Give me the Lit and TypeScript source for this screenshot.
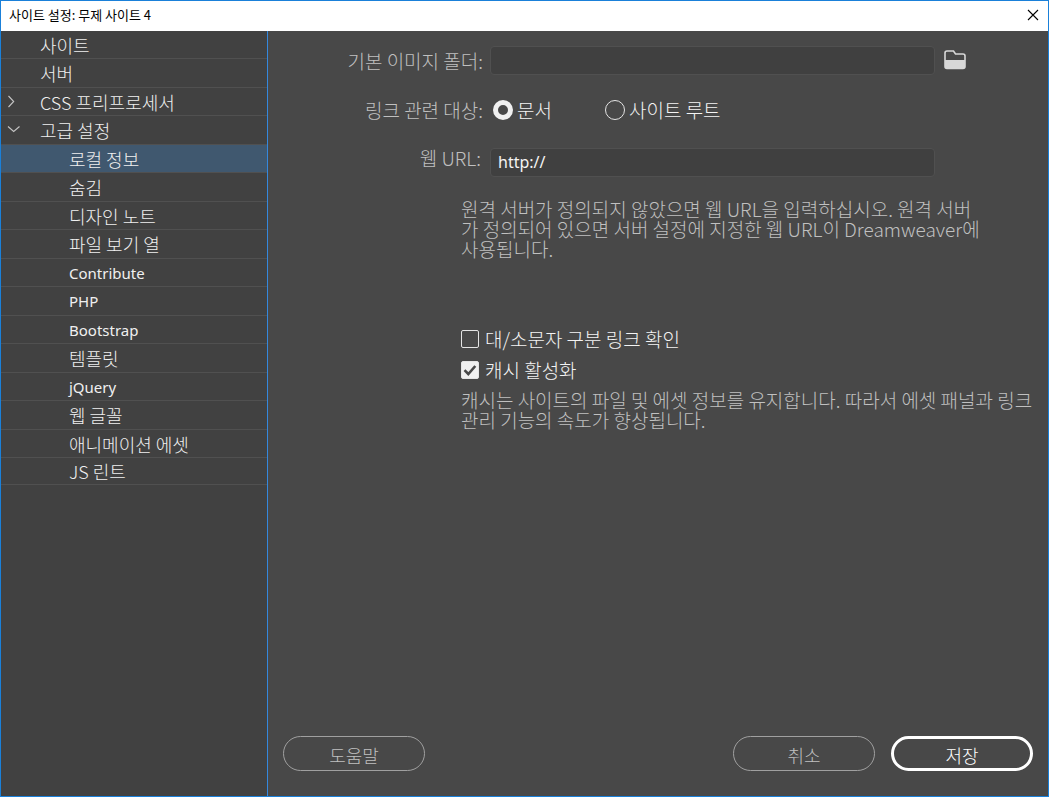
import { LitElement, html, css, nothing } from "lit";
import { customElement, state } from "lit/decorators.js";
import { classMap } from "lit/directives/class-map.js";

interface Category {
  label: string;
  child?: boolean;
  latin?: boolean;
  fold?: "open" | "closed";
}

const CATEGORIES: Category[] = [
  { label: "사이트" },
  { label: "서버" },
  { label: "CSS 프리프로세서", fold: "closed" },
  { label: "고급 설정", fold: "open" },
  { label: "로컬 정보", child: true },
  { label: "숨김", child: true },
  { label: "디자인 노트", child: true },
  { label: "파일 보기 열", child: true },
  { label: "Contribute", child: true, latin: true },
  { label: "PHP", child: true, latin: true },
  { label: "Bootstrap", child: true, latin: true },
  { label: "템플릿", child: true },
  { label: "jQuery", child: true, latin: true },
  { label: "웹 글꼴", child: true },
  { label: "애니메이션 에셋", child: true },
  { label: "JS 린트", child: true },
];

@customElement("category-list")
export class CategoryList extends LitElement {
  @state() private selected = 4;

  static styles = css`
    :host {
      display: block;
      box-sizing: border-box;
      background: #414141;
    }
    nav {
      height: 100%;
      box-sizing: border-box;
      border-right: 1px solid #3488de;
    }
    ul {
      list-style: none;
      margin: 0;
      padding: 0;
    }
    li {
      height: 28px;
      box-sizing: border-box;
      border-bottom: 1px solid #505050;
    }
    li:nth-child(even) {
      height: 29px;
    }
    li:last-child {
      height: 27px;
    }
    .row {
      display: flex;
      align-items: center;
      width: 100%;
      height: 100%;
      margin: 0;
      padding: 0 0 0 5px;
      border: 0;
      background: none;
      color: #f0f0f0;
      font: inherit;
      text-align: left;
    }
    .row.selected {
      background: #40586f;
    }
    .row.latin {
      font-family: "Noto Sans", sans-serif;
      font-size: 15px;
      font-weight: 400;
    }
    .fold {
      width: 34px;
      height: 14px;
      flex: none;
    }
    .child .fold {
      width: 63px;
    }
    svg {
      display: block;
      fill: none;
      stroke: #c4c4c4;
      stroke-width: 1.1;
    }
  `;

  private arrow(fold?: "open" | "closed") {
    if (!fold) return nothing;
    return html`<svg width="14" height="14" viewBox="0 0 14 14" aria-hidden="true">
      <path d=${fold === "open" ? "M2 3.5 L7.7 8.5 L13.5 3.5" : "M2.5 1 L7.7 6.5 L2.5 12"}></path>
    </svg>`;
  }

  render() {
    return html`<nav aria-label="설정 범주">
      <ul>
        ${CATEGORIES.map(
          (c, i) => html`<li>
            <button
              class=${classMap({ row: true, child: !!c.child, latin: !!c.latin, selected: i === this.selected })}
              @click=${() => (this.selected = i)}
            >
              <span class="fold">${this.arrow(c.fold)}</span>
              <span>${c.label}</span>
            </button>
          </li>`
        )}
      </ul>
    </nav>`;
  }
}

@customElement("app-root")
export class AppRoot extends LitElement {
  static styles = css`
    :host {
      display: flex;
      flex-direction: column;
      box-sizing: border-box;
      min-height: 100vh;
      border: 1px solid #1a80d9;
      background: #484848;
      color: #f4f4f4;
      font-family: "Noto Sans CJK KR", sans-serif;
      font-size: 18px;
      font-weight: 300;
      line-height: 20px;
    }
    .titlebar {
      display: flex;
      align-items: center;
      justify-content: space-between;
      height: 30px;
      padding: 0 9px 0 8px;
      background: #fff;
      color: #000;
    }
    h1 {
      margin: 0;
      padding-bottom: 2px;
      font-size: 13px;
      font-weight: 400;
      line-height: 16px;
    }
    button {
      font: inherit;
      color: inherit;
    }
    .icon-button {
      display: flex;
      padding: 0 0 2px;
      border: 0;
      background: none;
    }
    .body {
      flex: 1;
      display: grid;
      grid-template-columns: 267px minmax(0, 1fr);
    }
    main {
      display: flex;
      flex-direction: column;
      padding: 15px 15px 25px;
    }
    form {
      flex: 1;
      display: flex;
      flex-direction: column;
      font-size: 19px;
    }
    .fields {
      display: grid;
      grid-template-columns: 200px minmax(0, 1fr) 91px;
      column-gap: 7px;
      row-gap: 17px;
      align-items: center;
    }
    .label {
      text-align: right;
      color: #c0c0c0;
    }
    .relative-label {
      padding-bottom: 4px;
    }
    .url-label {
      align-self: start;
      padding-right: 2px;
    }
    .text {
      width: 100%;
      height: 29px;
      box-sizing: border-box;
      padding: 0 7px 2px;
      border: 1px solid #505050;
      border-radius: 4px;
      background: #404040;
      color: #f4f4f4;
      font-family: "Noto Sans", sans-serif;
      font-size: 16px;
    }
    .browse {
      padding-left: 2px;
    }
    .radios {
      display: flex;
      height: 39px;
      padding-bottom: 4px;
      box-sizing: border-box;
      align-items: center;
      grid-column: 2 / 4;
    }
    .option {
      display: flex;
      align-items: center;
      gap: 6px;
    }
    .radios .option {
      gap: 4px;
      min-width: 112px;
      padding-left: 3px;
      box-sizing: border-box;
    }
    input[type="radio"],
    input[type="checkbox"] {
      appearance: none;
      flex: none;
      margin: 0;
      box-sizing: border-box;
    }
    input[type="radio"] {
      width: 20px;
      height: 20px;
      border: 1px solid #e4e4e4;
      border-radius: 50%;
    }
    input[type="radio"]:checked {
      border: 5px solid #f0f0f0;
    }
    .check {
      position: relative;
      display: flex;
    }
    input[type="checkbox"] {
      width: 18px;
      height: 18px;
      border: 1px solid #e4e4e4;
      border-radius: 2px;
    }
    input[type="checkbox"]:checked {
      background: #f0f0f0;
    }
    .check svg {
      position: absolute;
      inset: 0;
      pointer-events: none;
      fill: none;
      stroke: #484848;
      stroke-width: 2.6;
    }
    .notes {
      padding-left: 178px;
    }
    p {
      margin: 0;
      color: #c0c0c0;
    }
    .url-note {
      max-width: 522px;
      padding-top: 22px;
      min-height: 120px;
    }
    .checks {
      display: grid;
      gap: 11px;
      padding: 10px 0;
    }
    footer {
      display: flex;
      gap: 16px;
    }
    .action {
      width: 142px;
      height: 35px;
      padding: 2px 0 0;
      border: 1px solid #a0a0a0;
      border-radius: 18px;
      background: none;
      color: #c0c0c0;
    }
    .help {
      margin-right: auto;
    }
    .primary {
      border: 3px solid #fff;
      color: #fff;
    }
  `;

  render() {
    return html`
      <header class="titlebar">
        <h1>사이트 설정: 무제 사이트 4</h1>
        <button class="icon-button" aria-label="닫기">
          <svg width="12" height="12" viewBox="0 0 12 12" fill="none" stroke="#000" stroke-width="1.1">
            <path d="M1 1 L11 11 M11 1 L1 11"></path>
          </svg>
        </button>
      </header>
      <div class="body">
        <category-list></category-list>
        <main>
          <form @submit=${(e: Event) => e.preventDefault()}>
            <div class="fields">
              <label class="label" for="folder">기본 이미지 폴더:</label>
              <input class="text" id="folder" type="text" />
              <button class="icon-button browse" type="button" aria-label="폴더 찾아보기">
                <svg width="22" height="20" viewBox="0 0 22 20">
                  <path
                    d="M1 3 Q1 1 3 1 H9.5 L11.5 4 H19 Q21 4 21 6 V16.5 Q21 18.5 19 18.5 H3 Q1 18.5 1 16.5 Z"
                    fill="none"
                    stroke="#d8d8d8"
                    stroke-width="1.6"
                  ></path>
                  <path d="M1 10 H21 V16.5 Q21 18.5 19 18.5 H3 Q1 18.5 1 16.5 Z" fill="#d8d8d8"></path>
                </svg>
              </button>

              <span class="label relative-label" id="relative">링크 관련 대상:</span>
              <div class="radios" role="radiogroup" aria-labelledby="relative">
                <label class="option"><input type="radio" name="relative" checked /><span>문서</span></label>
                <label class="option"><input type="radio" name="relative" /><span>사이트 루트</span></label>
              </div>

              <label class="label url-label" for="url">웹 URL:</label>
              <input class="text" id="url" type="text" value="http://" />
            </div>
            <div class="notes">
              <p class="url-note">
                원격 서버가 정의되지 않았으면 웹 URL을 입력하십시오. 원격 서버가 정의되어 있으면 서버 설정에
                지정한 웹 URL이 Dreamweaver에 사용됩니다.
              </p>
              <div class="checks">
                <label class="option">
                  <span class="check"><input type="checkbox" /></span>
                  <span>대/소문자 구분 링크 확인</span>
                </label>
                <label class="option">
                  <span class="check">
                    <input type="checkbox" checked />
                    <svg width="18" height="18" viewBox="0 0 18 18"><path d="M3.5 9.2 L7.3 13 L14.3 5"></path></svg>
                  </span>
                  <span>캐시 활성화</span>
                </label>
              </div>
              <p>
                캐시는 사이트의 파일 및 에셋 정보를 유지합니다. 따라서 에셋 패널과 링크 관리 기능의 속도가
                향상됩니다.
              </p>
            </div>
          </form>
          <footer>
            <button class="action help" type="button">도움말</button>
            <button class="action" type="button">취소</button>
            <button class="action primary" type="button">저장</button>
          </footer>
        </main>
      </div>
    `;
  }
}
